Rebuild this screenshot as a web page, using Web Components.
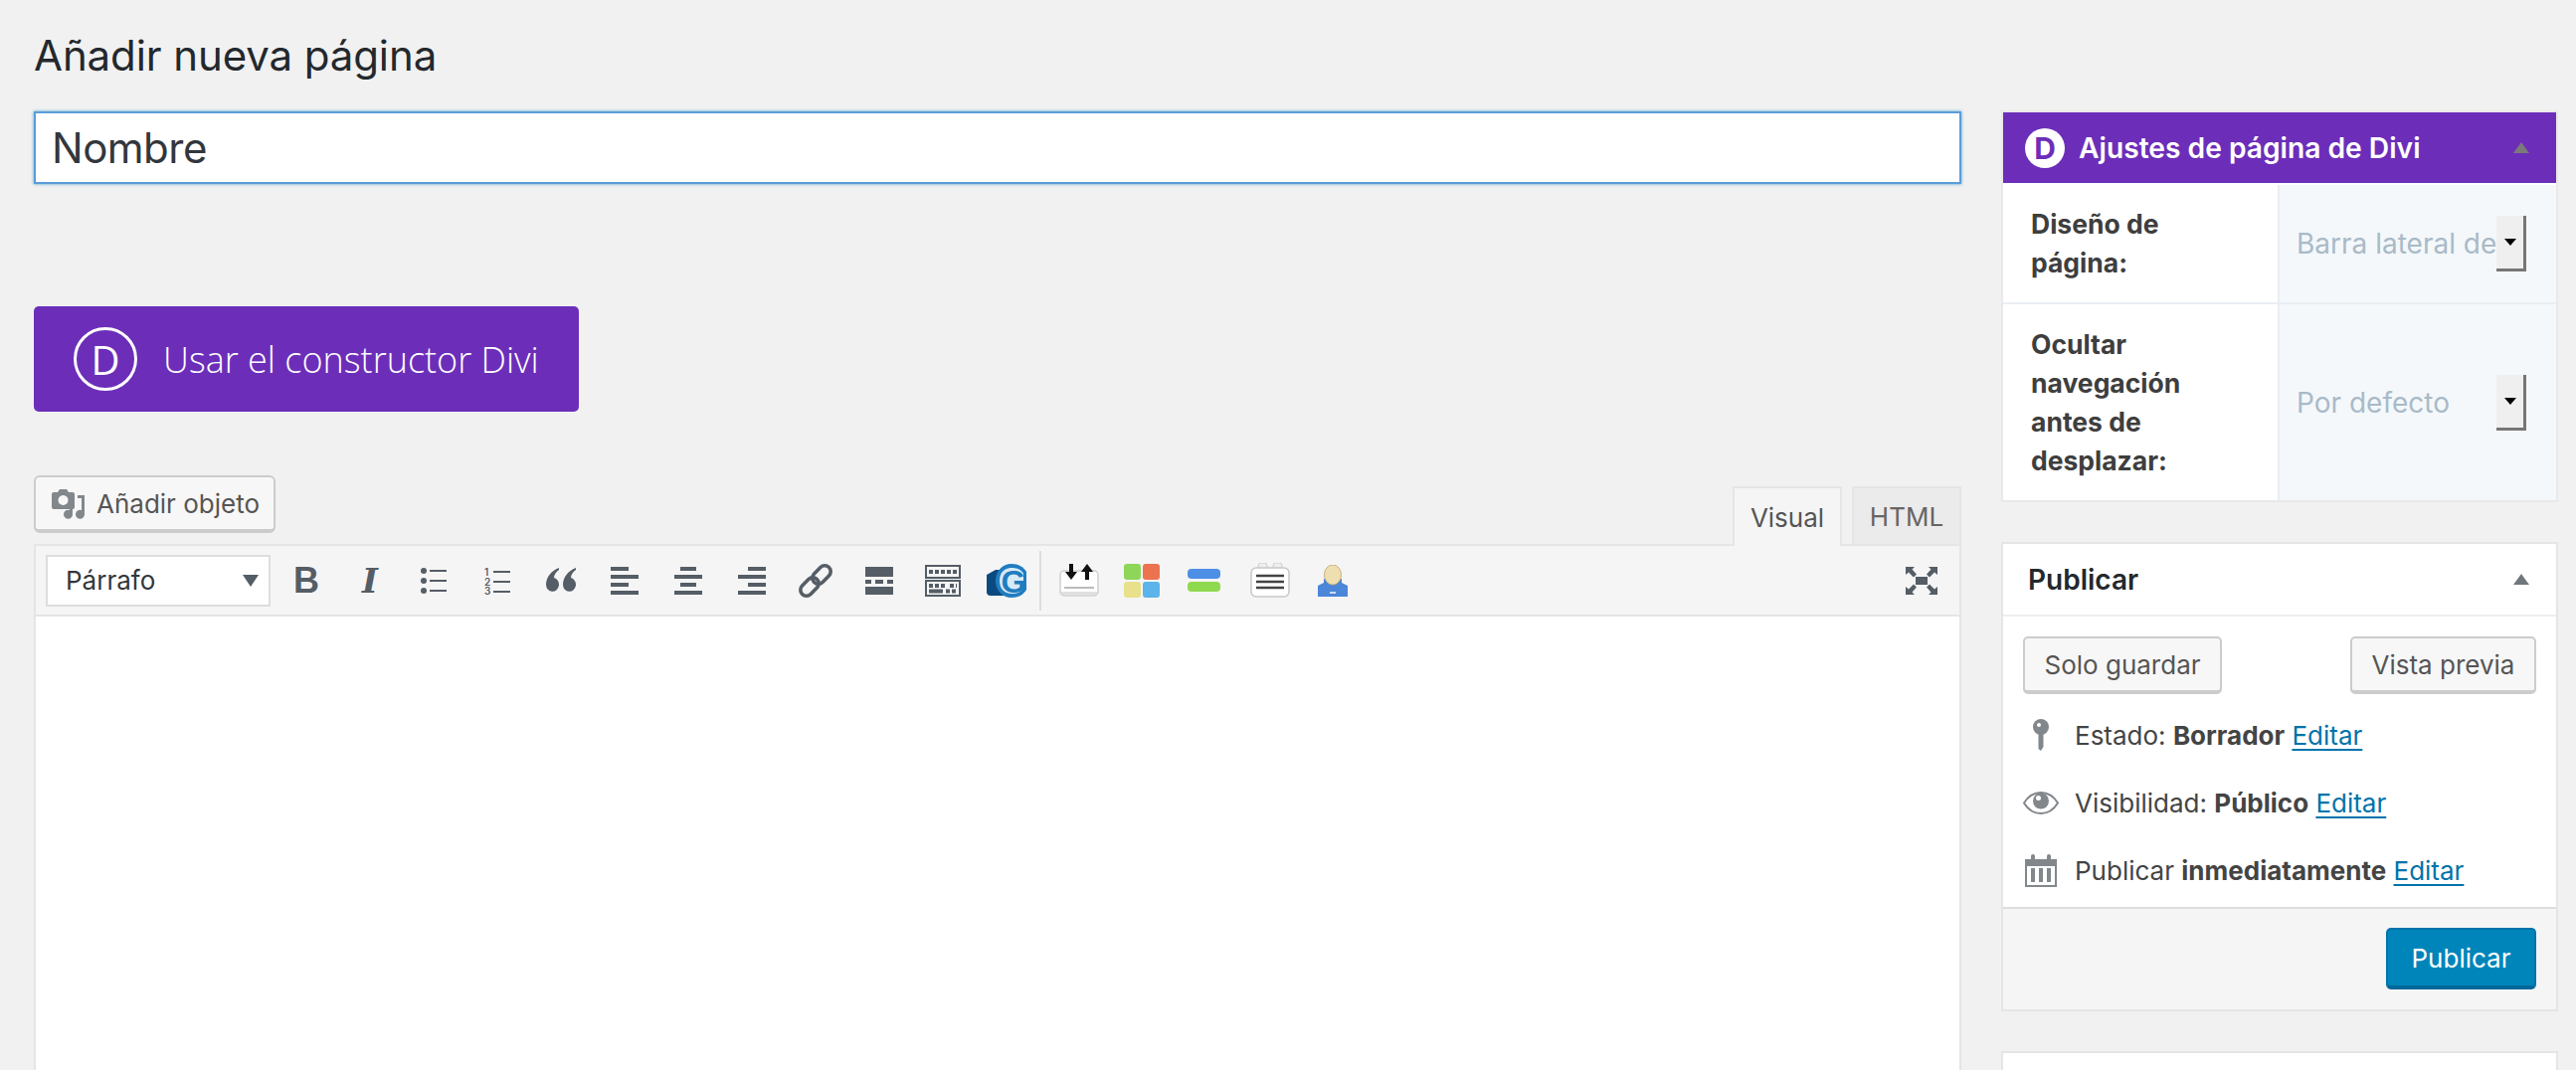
<!DOCTYPE html>
<html lang="es">
<head>
<meta charset="utf-8">
<title>Añadir nueva página</title>
<style>
  html, body { margin: 0; height: 1076px; overflow: hidden; background: #f1f1f1; }
  body { font-family: Inter, "Noto Sans", sans-serif; color: #444; }
</style>
</head>
<body>
<wp-page>
  <wp-heading slot="main">Añadir nueva página</wp-heading>
  <wp-title-field slot="main" value="Nombre"></wp-title-field>
  <divi-button slot="main">Usar el constructor Divi</divi-button>
  <wp-editor slot="main"></wp-editor>
  <divi-box slot="side"></divi-box>
  <publish-box slot="side"></publish-box>
  <empty-box slot="side"></empty-box>
</wp-page>

<script>
// ---------- layout general ----------
class WpPage extends HTMLElement {
  constructor() {
    super();
    this.attachShadow({ mode: "open" });
    this.shadowRoot.innerHTML = `
    <style>
      :host { display: grid; grid-template-columns: 1938px 560px; column-gap: 40px; padding-left: 34px; height: 1076px; overflow: hidden; }
      .col { display: flex; flex-direction: column; min-width: 0; }
      .side { padding-top: 111px; gap: 40px; }
    </style>
    <div class="col"><slot name="main"></slot></div>
    <div class="col side"><slot name="side"></slot></div>`;
  }
}

class WpHeading extends HTMLElement {
  constructor() {
    super();
    this.attachShadow({ mode: "open" });
    this.shadowRoot.innerHTML = `
    <style>
      :host { display: block; height: 112px; line-height: 112px; font-size: 42px; color: #23282d; letter-spacing: -.1px; white-space: nowrap; }
    </style><slot></slot>`;
  }
}

class WpTitleField extends HTMLElement {
  constructor() {
    super();
    this.attachShadow({ mode: "open" });
    this.shadowRoot.innerHTML = `
    <style>
      :host { display: flex; align-items: center; box-sizing: border-box; height: 73px; padding-left: 16px; background: #fff;
        border: 2px solid #5b9dd9; box-shadow: 0 0 3px rgba(30,140,190,.8); font-size: 42px; color: #32373c; letter-spacing: -.5px; }
    </style><span id="v"></span>`;
    this.shadowRoot.getElementById("v").textContent = this.getAttribute("value");
  }
}

class DiviButton extends HTMLElement {
  constructor() {
    super();
    this.attachShadow({ mode: "open" });
    this.shadowRoot.innerHTML = `
    <style>
      :host { display: flex; align-items: center; box-sizing: border-box; width: 548px; height: 106px; margin-top: 123px; padding-left: 40px; gap: 26px;
        background: #6c2eb9; border-radius: 5px; color: #fff; font: 300 36px "Open Sans", sans-serif; white-space: nowrap; }
      .logo { display: flex; align-items: center; justify-content: center; box-sizing: border-box; width: 64px; height: 64px; border: 3px solid #fff; border-radius: 50%; font-size: 40px; font-weight: 400; }
      .txt { flex: none; }
    </style>
    <span class="logo">D</span><span class="txt"><slot></slot></span>`;
  }
}

// ---------- iconos del editor ----------
const C = "#555d66";
const ICONOS = {
  bold: `<span style="font:700 36px/1 'Liberation Sans',sans-serif;color:${C}">B</span>`,
  italic: `<span style="font:italic 700 34px/1 'DejaVu Serif',serif;color:${C}">I</span>`,
  bullets: `<svg width="26" height="26" fill="${C}"><circle cx="3" cy="3" r="3"/><circle cx="3" cy="13" r="3"/><circle cx="3" cy="23" r="3"/><path d="M9 2h17v2H9zM9 12h17v2H9zM9 22h17v2H9z"/></svg>`,
  numbers: `<svg width="26" height="28" fill="${C}" font-family="Inter" font-size="10" font-weight="600"><text x="0" y="9">1</text><text x="0" y="19">2</text><text x="0" y="28">3</text><path d="M9 4h17v2H9zM9 14h17v2H9zM9 24h17v2H9z"/></svg>`,
  quote: `<svg width="30" height="25" viewBox="0 0 30 25" fill="${C}"><path d="M13 0C5 3 0 10 0 17a6.500 7 0 1 0 8-7c0-3 2-6 5-8zM30 0C22 3 17 10 17 17a6.500 7 0 1 0 8-7c0-3 2-6 5-8z"/></svg>`,
  left: `<svg width="28" height="28" fill="${C}"><path d="M0 0h18v4H0zM0 8h28v4H0zM0 16h18v4H0zM0 24h28v4H0z"/></svg>`,
  center: `<svg width="28" height="28" fill="${C}"><path d="M6 0h16v4H6zM0 8h28v4H0zM6 16h16v4H6zM0 24h28v4H0z"/></svg>`,
  right: `<svg width="28" height="28" fill="${C}"><path d="M10 0h18v4H10zM0 8h28v4H0zM10 16h18v4H10zM0 24h28v4H0z"/></svg>`,
  link: `<svg width="34" height="34" fill="none" stroke="${C}" stroke-width="3.600"><g transform="rotate(-45 17 17)"><rect x="-2" y="11" width="21" height="12" rx="6"/><rect x="15" y="11" width="21" height="12" rx="6"/></g></svg>`,
  more: `<svg width="28" height="28" fill="${C}"><path d="M0 0h28v10H0zM0 13h6v4H0zM10 13h8v4h-8zM22 13h6v4h-6zM0 20h28v8H0z"/></svg>`,
  sink: `<svg width="36" height="32" fill="none" stroke="${C}"><rect x="1" y="1" width="34" height="12" stroke-width="2"/><rect x="1" y="16" width="34" height="15" stroke-width="2"/><path stroke-width="4" stroke-dasharray="4 2" d="M4 7h28M4 21h18M25 21h7"/><path stroke-width="4" d="M4 26.500h14"/><path stroke-width="4" stroke-dasharray="4 2" d="M21 26.500h11"/></svg>`,
  gram: `<svg width="40" height="36" viewBox="0 0 40 36"><path fill="#0b4a80" d="M0 12l9-5h9v26H4a4 4 0 0 1-4-4z"/><path fill="#1f7dc0" d="M9 18C9 8 16 1 25 1c7 0 12 3 15 8v18c-3 5-8 8-15 8-9 0-16-7-16-17z"/><path fill="#d7eaf7" d="M13 18c0-8 5-13 12-13 6 0 10 2 12 6v14c-2 4-6 6-12 6-7 0-12-5-12-13z"/><text x="27" y="30" text-anchor="middle" font-family="Liberation Sans" font-weight="700" font-size="32" fill="#1f7dc0">G</text></svg>`,
  upload: `<svg width="40" height="33" viewBox="0 0 40 33"><rect x="1" y="7" width="38" height="25" rx="4" fill="#fff" stroke="#d0d0d0" stroke-width="1.500"/><path fill="#e0e0e0" d="M2 28h36v3H2z"/><path stroke="#bbb" stroke-width="2" d="M5 24h30"/><path fill="#111" d="M10 0h4v8h4l-6 8-6-8h4zM26 16h4V8h4l-6-8-6 8h4z"/></svg>`,
  grid: `<svg width="36" height="34" style="margin-right:3px"><rect x="0" y="0" width="17" height="16" rx="3" fill="#8ed65a"/><rect x="19" y="0" width="17" height="16" rx="3" fill="#ec7350"/><rect x="0" y="18" width="17" height="16" rx="3" fill="#e8e08a"/><rect x="19" y="18" width="17" height="16" rx="3" fill="#5cb4ea"/></svg>`,
  bars: `<svg width="33" height="23" style="margin-right:6px"><rect width="33" height="10" rx="4" fill="#4e8fe6"/><rect y="13" width="33" height="10" rx="4" fill="#8fd94e"/></svg>`,
  note: `<svg width="40" height="35" viewBox="0 0 40 35"><rect x="8" y="0" width="9" height="8" rx="3" fill="#eee" stroke="#ccc"/><rect x="23" y="0" width="9" height="8" rx="3" fill="#eee" stroke="#ccc"/><rect x="1" y="5" width="38" height="29" rx="5" fill="#fff" stroke="#c8c8c8" stroke-width="1.500"/><path stroke="#444" stroke-width="2.400" d="M6 13h28M6 19h28M6 25h28"/></svg>`,
  user: `<svg width="30" height="32" viewBox="0 0 30 32" style="margin-right:2px"><path fill="#4b86d8" d="M0 32V21l6-3V14h18v4l6 3v11z"/><path fill="#fff" opacity=".7" d="M12 27h6v2h-6z"/><ellipse cx="15" cy="10" rx="8.500" ry="10" fill="#efdfb0" stroke="#c7b27e"/></svg>`,
  full: `<svg width="32" height="28" fill="${C}"><path d="M10 10h12v8H10z"/><path d="M0 0h9L6.500 2.500 11 7.500 8 10.500 3 5.500 0 8zM32 0v8L29 5.500 24 10.500 21 7.500 25.500 2.500 23 0zM0 28v-8l3 2.500 5-5 3 3-4.500 5L9 28zM32 28h-9l2.500-2.500-4.500-5 3-3 5 5 3-2.500z"/></svg>`
};

class WpEditor extends HTMLElement {
  constructor() {
    super();
    this.attachShadow({ mode: "open" });
    const celda = k => `<span class="cell">${ICONOS[k]}</span>`;
    this.shadowRoot.innerHTML = `
    <style>
      :host { display: flex; flex-direction: column; margin-top: 64px; flex: 1; min-height: 0; }
      .top { display: flex; justify-content: space-between; height: 69px; }
      .media { display: flex; align-items: center; box-sizing: border-box; width: 243px; height: 58px; padding-left: 16px; gap: 12px; background: #f7f7f7;
        border: 2px solid #ccc; border-bottom-width: 4px; border-radius: 6px; color: #555; font-size: 26px; white-space: nowrap; }
      .tabs { display: flex; align-items: flex-end; gap: 10px; }
      .tab { display: flex; align-items: center; justify-content: center; box-sizing: border-box; width: 110px; height: 58px; background: #ebebeb; border: 2px solid #e5e5e5; border-bottom: 0; color: #666; font-size: 26px; }
      .tab.on { background: #f5f5f5; color: #555; height: 60px; margin-bottom: -2px; position: relative; }
      .bar { display: flex; align-items: center; box-sizing: border-box; height: 73px; padding-left: 10px; padding-right: 22px; background: #f5f5f5; border: 2px solid #e5e5e5; }
      .select { display: flex; align-items: center; justify-content: space-between; box-sizing: border-box; width: 226px; height: 52px; margin-right: 4px; padding: 0 10px 0 18px; background: #fff; border: 2px solid #ddd; color: #32373c; font-size: 26px; }
      .arrow { width: 0; height: 0; border-left: 8px solid transparent; border-right: 8px solid transparent; border-top: 12px solid #555d66; }
      .cell { display: flex; align-items: center; justify-content: center; flex: none; width: 64px; height: 50px; }
      .sep { flex: none; width: 2px; height: 60px; margin: 0 6px 0 1px; background: #ddd; }
      .plugin { display: flex; filter: blur(.5px); }
      .grow { flex: 1; }
      .full { display: flex; }
      .content { flex: 1; background: #fff; border: 2px solid #e5e5e5; border-top: 0; }
    </style>
    <div class="top">
      <div class="media">
        <svg width="33" height="32" viewBox="0 0 33 32" fill="#82878c"><path d="M0 7a2 2 0 0 1 2-2h4l2-3h7l2 3h4a2 2 0 0 1 2 2v13a2 2 0 0 1-2 2H2a2 2 0 0 1-2-2zM11.500 8a5 5 0 1 0 .01 0z" fill-rule="evenodd"/><path d="M26 8h7v19a4.500 4.500 0 1 1-3-4V11h-4zM18 19h3v8a4.500 4.500 0 1 1-3-4z"/></svg>
        <span>Añadir objeto</span>
      </div>
      <div class="tabs"><span class="tab on">Visual</span><span class="tab">HTML</span></div>
    </div>
    <div class="bar">
      <div class="select"><span>Párrafo</span><span class="arrow"></span></div>
      ${["bold","italic","bullets","numbers","quote","left","center","right","link","more","sink","gram"].map(celda).join("")}
      <span class="sep"></span>
      <span class="plugin">${["upload","grid","bars","note","user"].map(celda).join("")}</span>
      <span class="grow"></span>
      <span class="full">${ICONOS.full}</span>
    </div>
    <div class="content"></div>`;
  }
}

// ---------- caja de ajustes Divi ----------
class DiviBox extends HTMLElement {
  constructor() {
    super();
    this.attachShadow({ mode: "open" });
    this.shadowRoot.innerHTML = `
    <style>
      :host { display: block; background: #fff; border: 2px solid #e9e9e9; }
      .head { display: flex; align-items: center; height: 71px; padding-left: 22px; background: #6c2eb9; color: #fff; font-size: 28.200px; font-weight: 600; white-space: nowrap; }
      .logo { display: flex; align-items: center; justify-content: center; width: 40px; height: 40px; margin-right: 14px; background: #fff; border-radius: 50%; color: #6c2eb9; font-size: 30px; font-weight: 700; }
      .tri { margin-left: auto; margin-right: 27px; width: 0; height: 0; border-left: 8px solid transparent; border-right: 8px solid transparent; border-bottom: 11px solid #7a7a7a; }
      .row { display: grid; grid-template-columns: 276px 1fr; margin-top: 2px; }
      .row + .row { border-top: 2px solid #e9eef3; margin-top: 0; }
      .lab { display: flex; align-items: center; padding-left: 28px; font-size: 26.500px; font-weight: 700; line-height: 39px; color: #3e3e3e; }
      .val { display: flex; align-items: center; justify-content: space-between; padding: 0 30px 0 17px; background: #f4f8fb; border-left: 2px solid #e9eef3; color: #a9bac7; font-size: 28px; white-space: nowrap; }
      .r1 { height: 118px; } .r2 { height: 197px; }
      .spin { display: flex; align-items: center; justify-content: center; box-sizing: border-box; width: 30px; height: 56px; background: #efefef; border-right: 3px solid #767676; border-bottom: 3px solid #767676; }
      .spin i { width: 0; height: 0; border-left: 6px solid transparent; border-right: 6px solid transparent; border-top: 7px solid #000; }
    </style>
    <div class="head"><span class="logo">D</span>Ajustes de página de Divi<span class="tri"></span></div>
    <div class="row r1"><div class="lab"><span>Diseño de<br>página:</span></div><div class="val"><span>Barra lateral de</span><span class="spin"><i></i></span></div></div>
    <div class="row r2"><div class="lab"><span>Ocultar<br>navegación<br>antes de<br>desplazar:</span></div><div class="val"><span>Por defecto</span><span class="spin"><i></i></span></div></div>`;
  }
}

// ---------- caja publicar ----------
class PublishBox extends HTMLElement {
  constructor() {
    super();
    this.attachShadow({ mode: "open" });
    const G = "#82878c";
    const fila = (icono, texto, valor) => `<div class="line"><span class="ic">${icono}</span><span>${texto} <b>${valor}</b> <a>Editar</a></span></div>`;
    this.shadowRoot.innerHTML = `
    <style>
      :host { display: block; background: #fff; border: 2px solid #e5e5e5; font-size: 26px; color: #444; }
      .head { display: flex; align-items: center; justify-content: space-between; box-sizing: border-box; height: 73px; padding: 0 27px 0 25px; border-bottom: 2px solid #eee; font-size: 28px; font-weight: 600; color: #23282d; }
      .tri { width: 0; height: 0; border-left: 8px solid transparent; border-right: 8px solid transparent; border-bottom: 11px solid #72777c; }
      .btns { display: flex; justify-content: space-between; padding: 20px 20px 7px; }
      .btn { display: flex; align-items: center; justify-content: center; box-sizing: border-box; height: 58px; background: #f7f7f7; border: 2px solid #ccc; border-bottom-width: 4px; border-radius: 5px; color: #555; }
      .b1 { width: 200px; } .b2 { width: 187px; }
      .line { display: flex; align-items: center; height: 68px; padding-left: 20px; white-space: nowrap; }
      .ic { display: flex; justify-content: center; align-items: center; width: 36px; margin-right: 16px; }
      b { font-weight: 700; color: #444; }
      a { color: #0073aa; text-decoration: underline; text-underline-offset: 4px; }
      .foot { display: flex; justify-content: flex-end; box-sizing: border-box; height: 103px; margin-top: 3px; padding: 19px 20px 0; background: #f5f5f5; border-top: 2px solid #ddd; }
      .pub { display: flex; align-items: center; justify-content: center; box-sizing: border-box; width: 151px; height: 62px; background: #0085ba; border: 2px solid #0073aa; border-bottom: 4px solid #006799; border-radius: 5px; color: #fff; }
    </style>
    <div class="head"><span>Publicar</span><span class="tri"></span></div>
    <div class="btns"><span class="btn b1">Solo guardar</span><span class="btn b2">Vista previa</span></div>
    ${fila(`<svg width="16" height="32" fill="${G}"><circle cx="8" cy="8" r="8"/><path d="M5.500 12h5v16l-2.500 4-2.500-2z"/><circle cx="6" cy="6" r="2" fill="#fff"/></svg>`, "Estado:", "Borrador")}
    ${fila(`<svg width="36" height="23" viewBox="0 0 36 23" fill="${G}"><path d="M1 11.500C5 5 11 1 18 1s13 4 17 10.500C31 18 25 22 18 22S5 18 1 11.500z" fill="none" stroke="${G}" stroke-width="2"/><circle cx="18" cy="9.500" r="8"/><circle cx="15.500" cy="6.500" r="2.500" fill="#fff"/></svg>`, "Visibilidad:", "Público")}
    ${fila(`<svg width="32" height="33" viewBox="0 0 32 33" fill="${G}"><path fill-rule="evenodd" d="M0 5h6V2a2 2 0 0 1 4 0v3h12V2a2 2 0 0 1 4 0v3h6v28H0zM2 12v19h28V12z"/><path d="M6 14h4v14H6zM14 14h4v14h-4zM22 14h4v14h-4z"/></svg>`, "Publicar", "inmediatamente")}
    <div class="foot"><span class="pub">Publicar</span></div>`;
  }
}

class EmptyBox extends HTMLElement {
  constructor() {
    super();
    this.attachShadow({ mode: "open" });
    this.shadowRoot.innerHTML = `<style>:host { display: block; height: 80px; background: #fff; border: 2px solid #e5e5e5; }</style>`;
  }
}

customElements.define("wp-page", WpPage);
customElements.define("wp-heading", WpHeading);
customElements.define("wp-title-field", WpTitleField);
customElements.define("divi-button", DiviButton);
customElements.define("wp-editor", WpEditor);
customElements.define("divi-box", DiviBox);
customElements.define("publish-box", PublishBox);
customElements.define("empty-box", EmptyBox);
</script>
</body>
</html>
